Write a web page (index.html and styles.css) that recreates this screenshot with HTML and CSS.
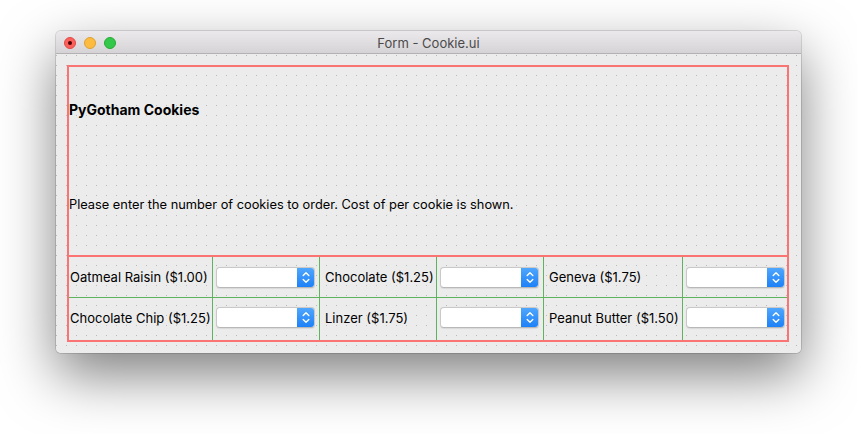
FILE: index.html
```html
<!DOCTYPE html>
<html>
<head>
<meta charset="utf-8">
<title>Form - Cookie.ui</title>
<link rel="stylesheet" href="styles.css">
</head>
<body>
<div class="window">
  <div class="titlebar">
    <div class="lights">
      <span class="light red"><span class="dot"></span></span>
      <span class="light yellow"></span>
      <span class="light green"></span>
    </div>
    <div class="title">Form - Cookie.ui</div>
    <div></div>
  </div>
  <div class="content">
    <div class="layout">
      <div class="heading-row"><span class="heading">PyGotham Cookies</span></div>
      <div class="desc-row">Please enter the number of cookies to order. Cost of per cookie is shown.</div>
      <div class="grid">
        <div class="cell label first">Oatmeal Raisin ($1.00)</div>
        <div class="cell combo-cell"><div class="combo"><span class="arrow"><svg width="18" height="21" viewBox="0 0 18 21"><path d="M6.2 8.6 L9 5.8 L11.8 8.6 M6.2 12.4 L9 15.2 L11.8 12.4" fill="none" stroke="#fff" stroke-width="1.4" stroke-linecap="round" stroke-linejoin="round"/></svg></span></div></div>
        <div class="cell label">Chocolate ($1.25)</div>
        <div class="cell combo-cell"><div class="combo"><span class="arrow"><svg width="18" height="21" viewBox="0 0 18 21"><path d="M6.2 8.6 L9 5.8 L11.8 8.6 M6.2 12.4 L9 15.2 L11.8 12.4" fill="none" stroke="#fff" stroke-width="1.4" stroke-linecap="round" stroke-linejoin="round"/></svg></span></div></div>
        <div class="cell label">Geneva ($1.75)</div>
        <div class="cell combo-cell last"><div class="combo"><span class="arrow"><svg width="18" height="21" viewBox="0 0 18 21"><path d="M6.2 8.6 L9 5.8 L11.8 8.6 M6.2 12.4 L9 15.2 L11.8 12.4" fill="none" stroke="#fff" stroke-width="1.4" stroke-linecap="round" stroke-linejoin="round"/></svg></span></div></div>

        <div class="cell label first row2">Chocolate Chip ($1.25)</div>
        <div class="cell combo-cell row2"><div class="combo"><span class="arrow"><svg width="18" height="21" viewBox="0 0 18 21"><path d="M6.2 8.6 L9 5.8 L11.8 8.6 M6.2 12.4 L9 15.2 L11.8 12.4" fill="none" stroke="#fff" stroke-width="1.4" stroke-linecap="round" stroke-linejoin="round"/></svg></span></div></div>
        <div class="cell label row2">Linzer ($1.75)</div>
        <div class="cell combo-cell row2"><div class="combo"><span class="arrow"><svg width="18" height="21" viewBox="0 0 18 21"><path d="M6.2 8.6 L9 5.8 L11.8 8.6 M6.2 12.4 L9 15.2 L11.8 12.4" fill="none" stroke="#fff" stroke-width="1.4" stroke-linecap="round" stroke-linejoin="round"/></svg></span></div></div>
        <div class="cell label row2">Peanut Butter ($1.50)</div>
        <div class="cell combo-cell last row2"><div class="combo"><span class="arrow"><svg width="18" height="21" viewBox="0 0 18 21"><path d="M6.2 8.6 L9 5.8 L11.8 8.6 M6.2 12.4 L9 15.2 L11.8 12.4" fill="none" stroke="#fff" stroke-width="1.4" stroke-linecap="round" stroke-linejoin="round"/></svg></span></div></div>
      </div>
    </div>
  </div>
</div>
</body>
</html>
```
FILE: styles.css
```css
html, body {
  margin: 0;
  padding: 0;
  background: #ffffff;
}
body {
  font-family: Inter, "Liberation Sans", Arial, sans-serif;
  font-size: 13px;
  color: #111;
  width: 857px;
  height: 434px;
  overflow: hidden;
}
.window {
  margin: 31px 0 0 56px;
  width: 745px;
  height: 322px;
  border-radius: 5px;
  background: #ececec;
  box-shadow: 0 22px 55px rgba(0,0,0,0.5), 0 0 0 1px rgba(0,0,0,0.13);
  display: flex;
  flex-direction: column;
  overflow: hidden;
}
.titlebar {
  height: 21px;
  padding-top: 1px;
  border-bottom: 1px solid #b3b1b3;
  background: linear-gradient(#ebe9eb, #d5d3d5);
  display: grid;
  grid-template-columns: 1fr auto 1fr;
  align-items: center;
  flex: none;
}
.lights {
  display: flex;
  gap: 8px;
  padding-left: 8px;
  align-items: center;
}
.light {
  width: 12px;
  height: 12px;
  border-radius: 50%;
  box-sizing: border-box;
  display: flex;
  align-items: center;
  justify-content: center;
}
.red { background: #fc605c; border: 0.5px solid #de4a45; }
.yellow { background: #fdbc40; border: 0.5px solid #dea033; }
.green { background: #34c84a; border: 0.5px solid #27aa35; }
.dot {
  width: 4px;
  height: 4px;
  border-radius: 50%;
  background: #4d0000;
}
.title {
  color: #4a4a4a;
  font-size: 13px;
}
.content {
  flex: 1;
  padding: 11px 12px 12px 11px;
  background-color: #ececec;
  background-image: url("data:image/svg+xml,%3Csvg xmlns='http://www.w3.org/2000/svg' width='10' height='10'%3E%3Crect width='1' height='1' fill='%23b9b9b9'/%3E%3C/svg%3E");
  background-position: 0 1px;
}
.layout {
  height: 273px;
  border: 2px solid #fb7474;
  display: flex;
  flex-direction: column;
}
.heading-row {
  height: 88px;
  box-sizing: border-box;
  padding-bottom: 3px;
  display: flex;
  align-items: center;
  flex: none;
}
.heading {
  font-weight: bold;
  font-size: 14px;
  color: #000;
}
.desc-row {
  height: 100px;
  box-sizing: border-box;
  padding-bottom: 2px;
  display: flex;
  align-items: center;
  color: #000;
  font-size: 12.8px;
  flex: none;
}
.grid {
  border-top: 2px solid #fb7474;
  display: grid;
  grid-template-columns: 144px 107px 117px 107px 139px 104px;
  grid-template-rows: 41px 42px;
}
.cell {
  border-right: 1px solid #5fb35f;
  border-bottom: 1px solid #5fb35f;
  display: flex;
  align-items: center;
  padding-left: 5px;
  color: #000;
  white-space: nowrap;
}
.cell.first { padding-left: 1px; }
.cell.row2 { border-bottom: none; padding-bottom: 3px; }
.cell.last { border-right: none; }
.combo-cell { padding-left: 3px; }
.combo {
  width: 99px;
  height: 21px;
  box-sizing: border-box;
  background: #fff;
  border: 1px solid #c9c9c9;
  border-bottom-color: #b8b8b8;
  border-radius: 4px;
  box-shadow: 0 0.5px 1px rgba(0,0,0,0.08);
  display: flex;
  justify-content: flex-end;
  overflow: hidden;
}
.arrow {
  width: 18px;
  height: 21px;
  margin: -1px -1px -1px 0;
  background: linear-gradient(#52a8fd, #1a7ff6);
  border-radius: 0 4px 4px 0;
  display: flex;
  align-items: center;
  justify-content: center;
}
.arrow svg { display: block; }
```
